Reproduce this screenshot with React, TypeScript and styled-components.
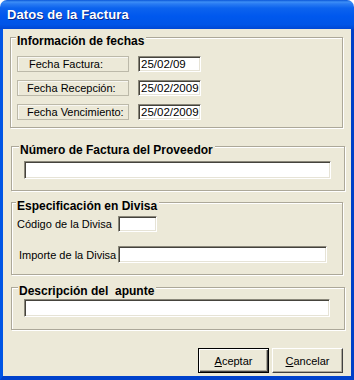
import React from 'react';
import styled, { createGlobalStyle } from 'styled-components';

const GlobalStyle = createGlobalStyle`
  html, body {
    margin: 0;
    padding: 0;
    background: #ffffff;
  }
  body {
    font-family: 'Liberation Sans', Arial, sans-serif;
    font-size: 11px;
    color: #000;
  }
  * {
    box-sizing: border-box;
  }
`;

const Window = styled.div`
  width: 354px;
  height: 380px;
  display: flex;
  flex-direction: column;
`;

const TitleBar = styled.div`
  height: 29px;
  flex: none;
  display: flex;
  align-items: center;
  padding: 0 0 1px 7px;
  border-radius: 7px 7px 0 0;
  background: linear-gradient(
    to bottom,
    #0a56d8 0%,
    #3d8ff6 7%,
    #2a7cf3 13%,
    #0c63ee 28%,
    #0058ee 55%,
    #0055e7 85%,
    #0047d4 100%
  );
`;

const Title = styled.span`
  color: #ffffff;
  font-weight: bold;
  font-size: 13px;
  text-shadow: 1px 1px 0 #0a2a8c;
  letter-spacing: 0.1px;
`;

const Frame = styled.div`
  flex: 1;
  display: flex;
  border-left: 3px solid #0055e5;
  border-right: 3px solid #0040c8;
  border-bottom: 4px solid #0042cc;
`;

const Client = styled.div`
  flex: 1;
  display: flex;
  flex-direction: column;
  padding-top: 8px;
  background: #ece9d8;
`;

type GroupProps = {
  $top: number;
  $left: number;
  $width: number;
  $height: number;
  $pad: string;
};

const Group = styled.div<GroupProps>`
  position: relative;
  flex: none;
  margin-top: ${(p) => p.$top}px;
  margin-left: ${(p) => p.$left}px;
  width: ${(p) => p.$width}px;
  height: ${(p) => p.$height}px;
  padding: ${(p) => p.$pad};
  border: 1px solid #aca899;
  box-shadow: inset 1px 1px 0 #ffffff, 1px 1px 0 #ffffff;
`;

const Legend = styled.span<{ $left: number }>`
  position: absolute;
  top: -4px;
  left: ${(p) => p.$left}px;
  padding: 0 2px 0 1px;
  line-height: 14px;
  font-weight: bold;
  font-size: 12px;
  background: #ece9d8;
  white-space: pre;
`;

const DateRows = styled.div`
  display: flex;
  flex-direction: column;
  gap: 8px;
`;

const DateRow = styled.div`
  display: flex;
  gap: 9px;
  height: 16px;
`;

const Caption = styled.div<{ $indent: number }>`
  width: 112px;
  height: 16px;
  line-height: 14px;
  padding-left: ${(p) => p.$indent}px;
  border: 1px solid #bcb9a9;
  box-shadow: inset 1px 1px 0 #f8f7f2;
  white-space: nowrap;
`;

const Field = styled.input<{ $width: number; $height: number }>`
  display: block;
  width: ${(p) => p.$width}px;
  height: ${(p) => p.$height}px;
  margin: 0;
  padding: 0 0 0 2px;
  font-family: 'Liberation Sans', Arial, sans-serif;
  font-size: 11.5px;
  color: #000;
  background: #ffffff;
  border-style: solid;
  border-width: 1px;
  border-color: #8a877a #ffffff #ffffff #8a877a;
  box-shadow: inset 1px 1px 0 #45433c, inset -1px -1px 0 #e6e3d6;
  outline: none;
`;

const CurrencyGrid = styled.div`
  display: grid;
  grid-template-columns: 106px auto;
  row-gap: 14px;
  align-items: center;
`;

const FieldLabel = styled.span<{ $indent: number }>`
  padding-left: ${(p) => p.$indent}px;
  white-space: nowrap;
`;

const Buttons = styled.div`
  display: flex;
  justify-content: flex-end;
  gap: 3px;
  margin-top: 18px;
  padding-right: 8px;
`;

const Button = styled.button<{ $default?: boolean }>`
  width: 71px;
  height: 25px;
  margin: 0;
  padding: 0;
  font-family: 'Liberation Sans', Arial, sans-serif;
  font-size: 11px;
  color: #000;
  background: #ece9d8;
  border: 1px solid ${(p) => (p.$default ? '#000000' : '#ffffff')};
  border-right-color: ${(p) => (p.$default ? '#000000' : '#404040')};
  border-bottom-color: ${(p) => (p.$default ? '#000000' : '#404040')};
  box-shadow: ${(p) =>
    p.$default
      ? 'inset 1px 1px 0 #ffffff, inset -1px -1px 0 #404040, inset -2px -2px 0 #aca899'
      : 'inset -1px -1px 0 #aca899'};
`;

const dates = [
  { label: 'Fecha Factura:', value: '25/02/09', indent: 11 },
  { label: 'Fecha Recepción:', value: '25/02/2009', indent: 9 },
  { label: 'Fecha Vencimiento:', value: '25/02/2009', indent: 9 },
];

export default function App() {
  return (
    <>
      <GlobalStyle />
      <Window>
        <TitleBar>
          <Title>Datos de la Factura</Title>
        </TitleBar>
        <Frame>
          <Client>
            <Group $top={0} $left={7} $width={333} $height={91} $pad="18px 0 0 6px">
              <Legend $left={5}>Información de fechas</Legend>
              <DateRows>
                {dates.map((d) => (
                  <DateRow key={d.label}>
                    <Caption $indent={d.indent}>{d.label}</Caption>
                    <Field $width={63} $height={16} defaultValue={d.value} readOnly />
                  </DateRow>
                ))}
              </DateRows>
            </Group>

            <Group $top={18} $left={8} $width={334} $height={45} $pad="14px 0 0 12px">
              <Legend $left={7}>Número de Factura del Proveedor</Legend>
              <Field $width={307} $height={18} readOnly />
            </Group>

            <Group $top={11} $left={8} $width={332} $height={73} $pad="13px 0 0 0">
              <Legend $left={4}>Especificación en Divisa</Legend>
              <CurrencyGrid>
                <FieldLabel $indent={5}>Código de la Divisa</FieldLabel>
                <Field $width={39} $height={16} readOnly />
                <FieldLabel $indent={7}>Importe de la Divisa</FieldLabel>
                <Field $width={209} $height={17} readOnly />
              </CurrencyGrid>
            </Group>

            <Group $top={12} $left={8} $width={334} $height={43} $pad="11px 0 0 12px">
              <Legend $left={6}>{'Descripción del  apunte'}</Legend>
              <Field $width={306} $height={18} readOnly />
            </Group>

            <Buttons>
              <Button $default>
                <u>A</u>ceptar
              </Button>
              <Button>
                <u>C</u>ancelar
              </Button>
            </Buttons>
          </Client>
        </Frame>
      </Window>
    </>
  );
}
